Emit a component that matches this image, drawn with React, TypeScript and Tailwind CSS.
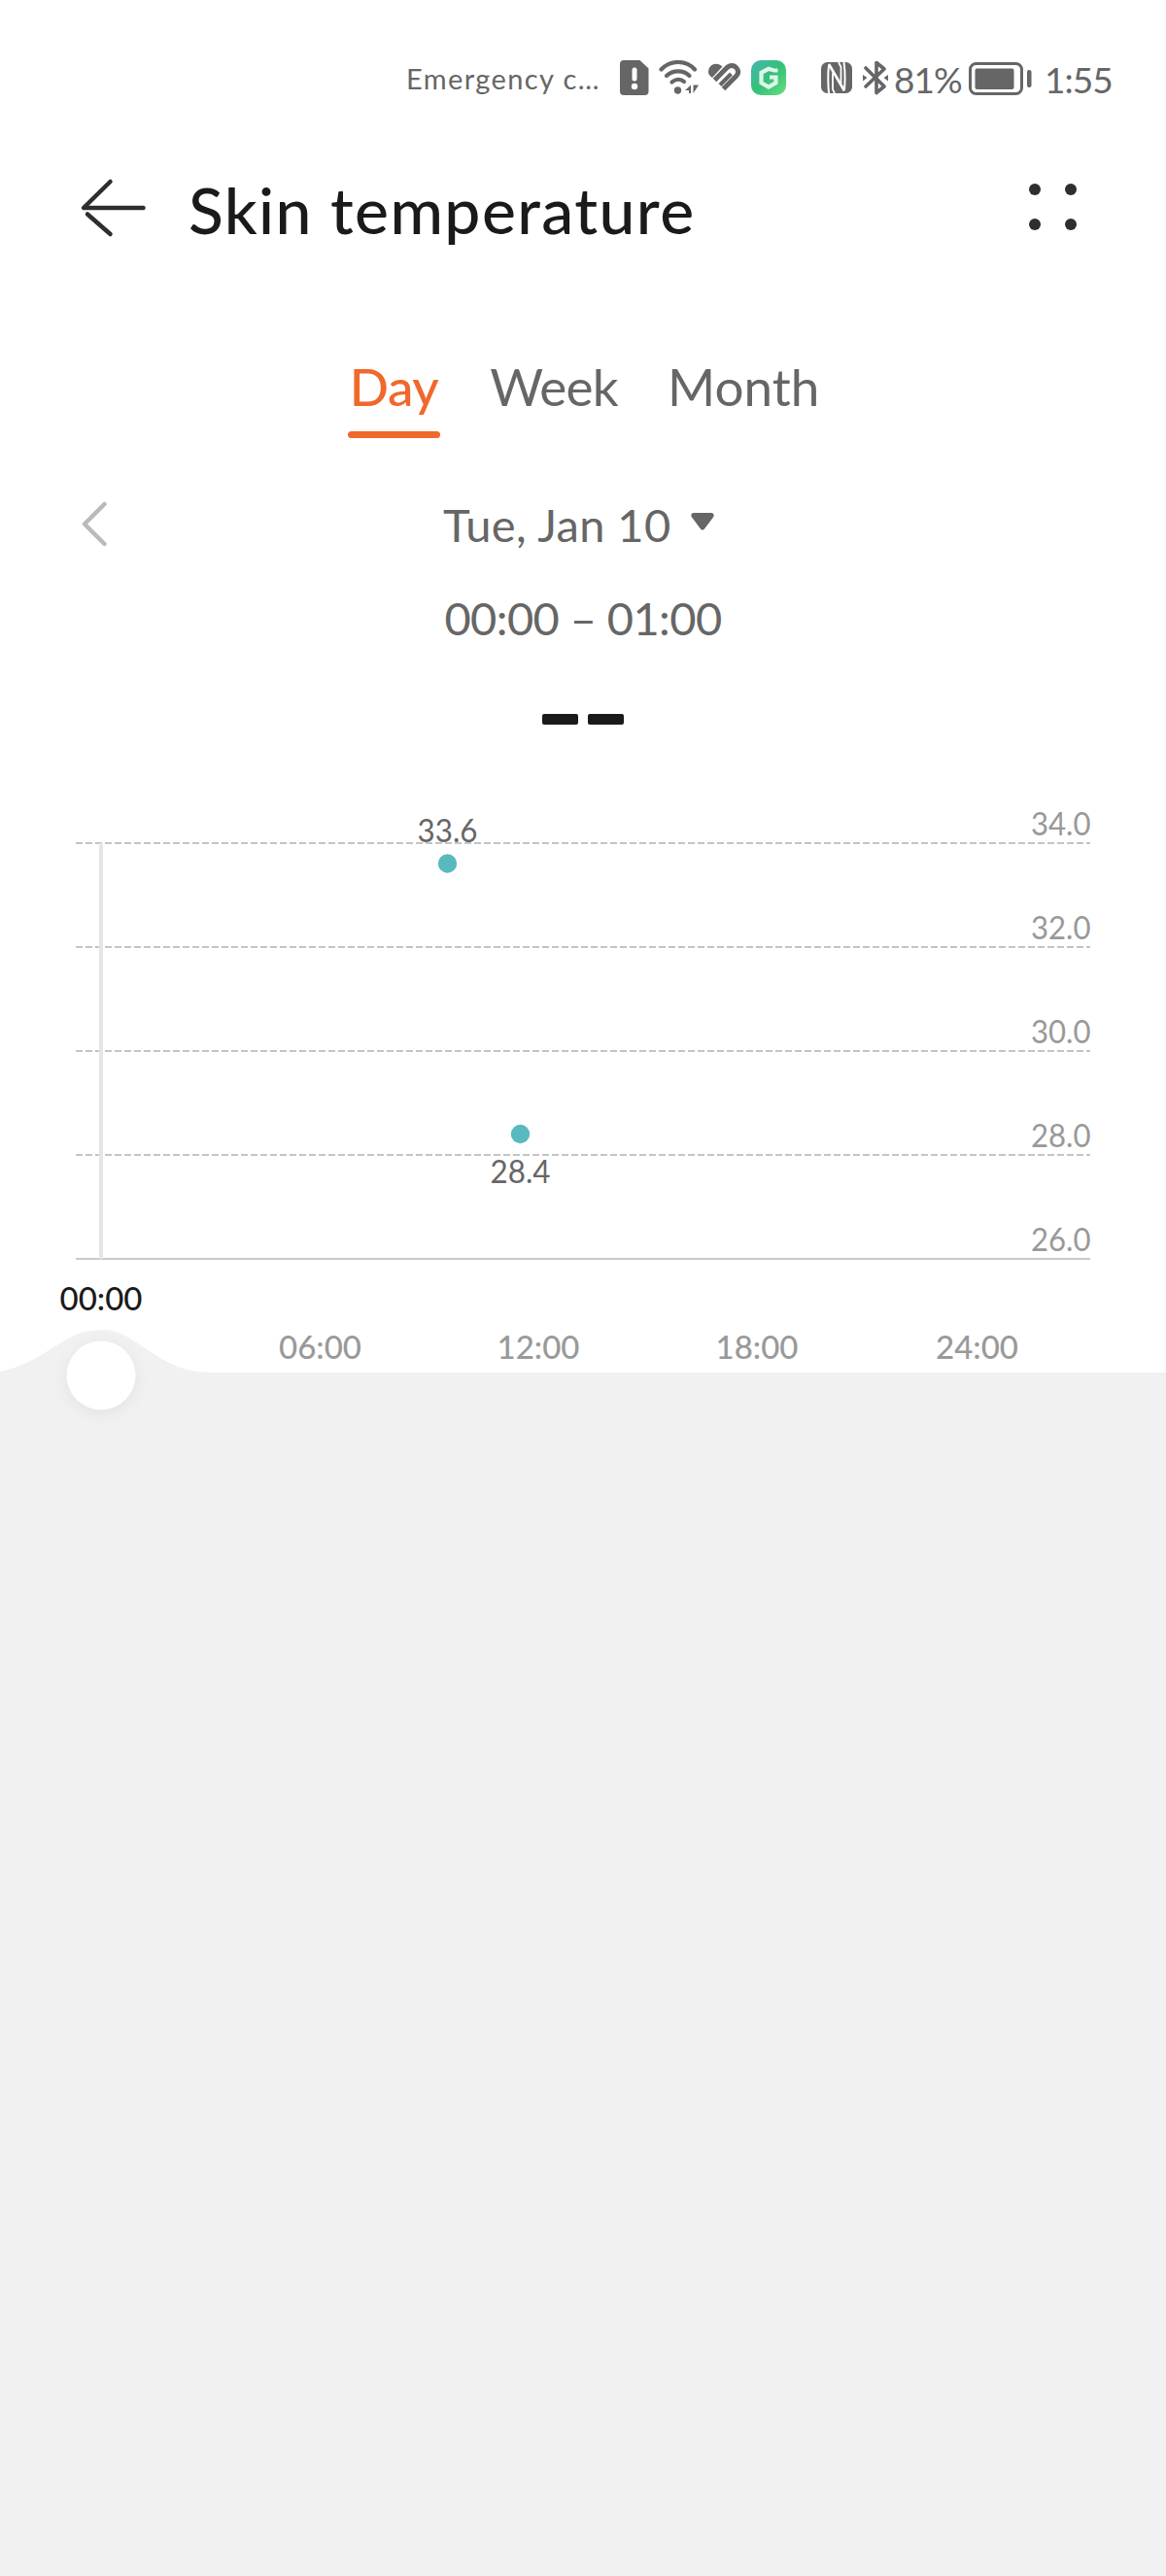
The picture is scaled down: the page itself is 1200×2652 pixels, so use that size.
const TABS = [
  { label: "Day", width: "w-[95px]", textClass: "text-[#f0682c] font-medium tracking-[-0.5px]", active: true },
  { label: "Week", width: "w-[132px]", textClass: "text-[#666666] tracking-[-0.8px]", active: false },
  { label: "Month", width: "w-[155px]", textClass: "text-[#666666]", active: false },
];

const GRID = [
  { value: "34.0", y: 68 },
  { value: "32.0", y: 175 },
  { value: "30.0", y: 282 },
  { value: "28.0", y: 389 },
  { value: "26.0", y: 496 },
];

const POINTS = [
  { value: "33.6", x: 460.5, y: 89, labelY: 67 },
  { value: "28.4", x: 535.5, y: 367.5, labelY: 417.5 },
];

const HOURS = [
  { label: "06:00", x: 329.5 },
  { label: "12:00", x: 554 },
  { label: "18:00", x: 779 },
  { label: "24:00", x: 1005.5 },
];

const SimIcon = () => (
  <svg width="30" height="36" viewBox="0 0 30 36">
    <path d="M4 0h16.500l9 8.500V32a4 4 0 0 1-4 4H4a4 4 0 0 1-4-4V4a4 4 0 0 1 4-4z" fill="#666" />
    <path d="M15 10v9" stroke="#fff" strokeWidth="5" strokeLinecap="round" />
    <circle cx="15" cy="27" r="3.200" fill="#fff" />
  </svg>
);

const WifiIcon = () => (
  <svg width="42" height="36" viewBox="0 0 42 36">
    <g fill="none" stroke="#666" strokeWidth="4.200" strokeLinecap="round">
      <path d="M2.500 9.500C12-.500 28-.500 37 9.500" />
      <path d="M8 16c6.500-6.300 17.500-6.300 23.500 0" />
      <path d="M13.500 22.500c4-3.600 9-3.600 12.500-.500" />
    </g>
    <circle cx="19.500" cy="31" r="3.700" fill="#666" />
    <path d="M33 25.500V34h-2v-3h-4zM35.500 34v-8.500h5.500l-2.500 4z" fill="#666" />
  </svg>
);

const HealthIcon = () => (
  <svg width="34" height="30" viewBox="0 0 34 30">
    <path d="M0 9C0 3 6-1 11.500 1.500c1 .500 2 1.200 3 2L4 15C1.500 13 0 11.500 0 9z" fill="#666" />
    <g fill="none" stroke="#666" strokeWidth="5">
      <path d="M6.500 17.500 18.500 5.300C22 1.500 26.500 2 29 5s2 6-.500 8.500L15.500 26.500" />
      <path d="M12 22.500 23.500 11" strokeWidth="4" />
    </g>
  </svg>
);

const GuardIcon = () => (
  <svg width="36" height="36" viewBox="0 0 36 36">
    <defs>
      <linearGradient id="guard" x1="0" y1="0" x2="1" y2="1">
        <stop offset="0" stopColor="#45b8b4" />
        <stop offset=".5" stopColor="#35bf78" />
        <stop offset="1" stopColor="#66df7f" />
      </linearGradient>
    </defs>
    <rect width="36" height="36" rx="10" fill="url(#guard)" />
    <path
      d="M27.500 10.500h-4L18 8.800l-7.500 4v10.400l7.500 4.300 7.500-4.300v-5.700h-6.500"
      fill="none"
      stroke="#dcf7e8"
      strokeWidth="4.200"
    />
  </svg>
);

const NfcIcon = () => (
  <svg width="32" height="32" viewBox="0 0 32 32">
    <rect width="32" height="32" rx="6.500" fill="#666" />
    <g fill="none" stroke="#fff" strokeWidth="2">
      <path d="M8 3C7 12 7 21 8 32" />
      <path d="M8 2 24 29.500" strokeWidth="2.600" />
      <path d="M12 11v17l2 4" strokeWidth="1.800" />
      <path d="M18 0l2.500 5v17" strokeWidth="1.800" />
      <path d="M23.500 0c1.300 9 1.300 20 .500 29" />
    </g>
  </svg>
);

const BluetoothIcon = () => (
  <svg width="26" height="36" viewBox="0 0 26 36">
    <path
      d="M3 8l19 19-8 6.500V2.500L22 9 3 27"
      fill="none"
      stroke="#666"
      strokeWidth="3.600"
      strokeLinecap="round"
      strokeLinejoin="round"
    />
    <path d="M0 15l4.500 3L0 21.500zM26 15l-4.500 3 4.500 3.500z" fill="#666" />
  </svg>
);

const BatteryIcon = () => (
  <svg width="66" height="34" viewBox="0 0 66 34">
    <rect x="1.500" y="1.500" width="53" height="31" rx="6" fill="none" stroke="#666" strokeWidth="3" />
    <rect x="6.500" y="6.500" width="40" height="21.500" rx="2" fill="#666" />
    <rect x="60" y="8" width="4.500" height="18" rx="2" fill="#666" />
  </svg>
);

const StatusBar = () => (
  <div className="flex h-[160px] items-center whitespace-nowrap pl-[418px] text-[#666666]">
    <span className="mt-[2px] w-[220px] text-[29px] tracking-[1.4px]">Emergency c…</span>
    <SimIcon />
    <div className="ml-[10px]">
      <WifiIcon />
    </div>
    <div className="ml-[9px]">
      <HealthIcon />
    </div>
    <div className="ml-[10px]">
      <GuardIcon />
    </div>
    <div className="ml-[36px]">
      <NfcIcon />
    </div>
    <div className="ml-[11px]">
      <BluetoothIcon />
    </div>
    <span className="ml-[6px] mt-[3px] w-[77px] text-[37px] tracking-[-1px]">81%</span>
    <div className="mt-[2px]">
      <BatteryIcon />
    </div>
    <span className="ml-[12px] mt-[3px] text-[37px] tracking-[-1px]">1:55</span>
  </div>
);

const Header = () => (
  <header className="flex h-[108px] items-center pl-[82px] pr-[92px]">
    <button>
      <svg width="70" height="64" viewBox="0 0 70 64" fill="none" stroke="#2e2e2e" strokeWidth="4.500" strokeLinecap="round">
        <path d="M31.500 5 4 32h61.500" strokeLinejoin="round" />
        <path d="M8 38.500 31.500 59" />
      </svg>
    </button>
    <h1 className="ml-[42px] mt-[2px] whitespace-nowrap text-[66px] font-medium tracking-[1.4px] text-[#1a1a1a]">
      Skin temperature
    </h1>
    <button className="-mt-[2px] ml-auto grid grid-cols-2 gap-x-[25px] gap-y-[24px]">
      {[0, 1, 2, 3].map((dot) => (
        <span key={dot} className="size-[12px] rounded-full bg-[#2e2e2e]" />
      ))}
    </button>
  </header>
);

const Chart = () => (
  <svg width="1200" height="700" viewBox="0 0 1200 700" className="block font-['Lato',sans-serif]">
    {GRID.map((line, i) => (
      <g key={line.value}>
        <path
          d={`M78 ${line.y}H1122`}
          stroke={i === GRID.length - 1 ? "#cacaca" : "#c4c4c4"}
          strokeWidth="2"
          strokeDasharray={i === GRID.length - 1 ? undefined : "7 3"}
        />
        <text x="1061" y={line.y - 8.5} textLength="61.500" lengthAdjust="spacingAndGlyphs" fontSize="33" fill="#999">
          {line.value}
        </text>
      </g>
    ))}
    <path d="M104 68V496" stroke="#e5e5e5" strokeWidth="4" />

    {POINTS.map((point) => (
      <g key={point.value}>
        <circle cx={point.x} cy={point.y} r="9.700" fill="#59b9c1" />
        <text
          x={point.x - 31}
          y={point.labelY}
          textLength="62"
          lengthAdjust="spacingAndGlyphs"
          fontSize="33"
          fill="#666"
        >
          {point.value}
        </text>
      </g>
    ))}

    {/* selected hour and its handle */}
    <path d="M0 612C45 604 65 569 104 569S160 613 218 613H1200V700H0z" fill="#f1f1f1" />
    <circle cx="104" cy="616" r="35.500" fill="#fff" className="drop-shadow-[0_4px_8px_rgba(0,0,0,0.06)]" />
    <text
      x="61.500"
      y="548.500"
      textLength="85"
      lengthAdjust="spacingAndGlyphs"
      fontSize="33"
      fontWeight="500"
      fill="#1a1a1a"
    >
      00:00
    </text>
    {HOURS.map((hour) => (
      <text
        key={hour.label}
        x={hour.x - 42.5}
        y="599"
        textLength="85"
        lengthAdjust="spacingAndGlyphs"
        fontSize="33"
        fontWeight="500"
        fill="#999"
      >
        {hour.label}
      </text>
    ))}
  </svg>
);

const App = () => {
  return (
    <div className="flex h-[2652px] w-[1200px] flex-col overflow-hidden bg-white font-['Lato',sans-serif]">
      <StatusBar />
      <Header />

      <nav className="mt-[100px] flex items-start gap-[51px] pl-[358px]">
        {TABS.map((tab) => (
          <button key={tab.label} className={tab.width}>
            <span className={`block whitespace-nowrap text-center text-[53px] leading-[60px] ${tab.textClass}`}>
              {tab.label}
            </span>
            {tab.active && <span className="mt-[16px] block h-[7px] rounded-full bg-[#f0682c]" />}
          </button>
        ))}
      </nav>

      <div className="mt-[59px] flex h-[60px] items-center pl-[83px] text-[#666666]">
        <svg width="28" height="48" viewBox="0 0 28 48" fill="none" stroke="#bababa" strokeWidth="4.500" strokeLinecap="round" strokeLinejoin="round">
          <path d="M24.500 3 4 23.500 24.500 44" />
        </svg>
        <span className="ml-[345px] w-[255px] whitespace-nowrap text-[47px] tracking-[0.4px]">Tue, Jan 10</span>
        <svg width="24" height="18" viewBox="0 0 24 18" className="-mt-[6px]">
          <path d="M3 0h18c2.500 0 3.500 2.500 2 4.500L14 16.500c-1 1.500-3 1.500-4 0L1 4.500C-.500 2.500.500 0 3 0z" fill="#666" />
        </svg>
      </div>

      <p className="mt-[41px] whitespace-nowrap text-center text-[47px] leading-[50px] tracking-[-0.6px] text-[#666666]">
        00:00 – 01:00
      </p>

      <div className="mt-[74px] flex justify-center gap-[10px]">
        <span className="h-[11px] w-[37px] rounded-[2px] bg-[#1a1a1a]" />
        <span className="h-[11px] w-[37px] rounded-[2px] bg-[#1a1a1a]" />
      </div>

      <div className="mt-[54px]">
        <Chart />
      </div>
      <div className="flex-1 bg-[#f1f1f1]" />
    </div>
  );
};

export default App;
